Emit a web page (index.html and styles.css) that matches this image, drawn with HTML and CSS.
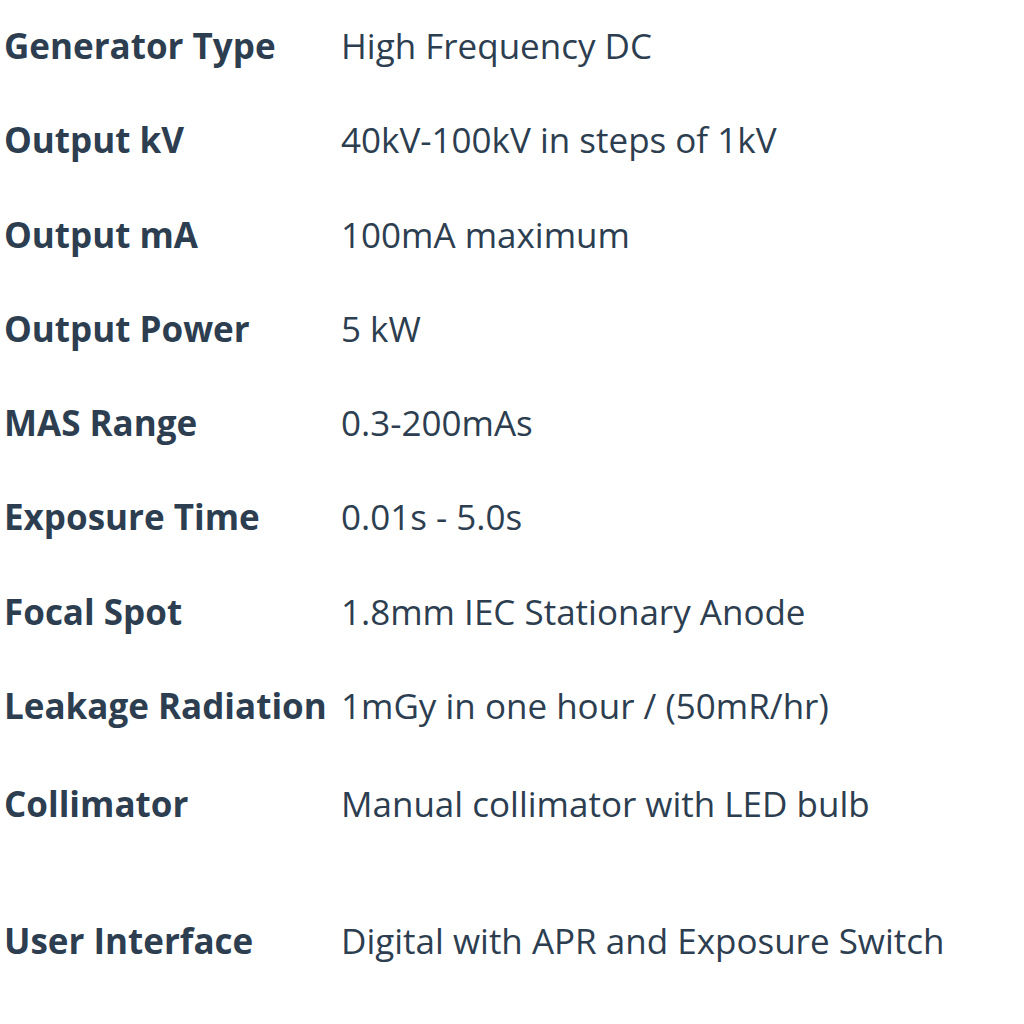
FILE: index.html
```html
<!DOCTYPE html>
<html lang="en">
<head>
<meta charset="utf-8">
<title>Specifications</title>
<link rel="stylesheet" href="styles.css">
</head>
<body>
<div class="specs">
  <div class="row"><div class="label">Generator Type</div><div class="value">High Frequency DC</div></div>
  <div class="row"><div class="label">Output kV</div><div class="value">40kV-100kV in steps of 1kV</div></div>
  <div class="row"><div class="label">Output mA</div><div class="value">100mA maximum</div></div>
  <div class="row"><div class="label">Output Power</div><div class="value">5 kW</div></div>
  <div class="row"><div class="label">MAS Range</div><div class="value">0.3-200mAs</div></div>
  <div class="row"><div class="label">Exposure Time</div><div class="value">0.01s - 5.0s</div></div>
  <div class="row"><div class="label">Focal Spot</div><div class="value">1.8mm IEC Stationary Anode</div></div>
  <div class="row"><div class="label">Leakage Radiation</div><div class="value">1mGy in one hour / (50mR/hr)</div></div>
  <div class="row row-tall"><div class="label">Collimator</div><div class="value">Manual collimator with LED bulb</div></div>
  <div class="row"><div class="label">User Interface</div><div class="value">Digital with APR and Exposure Switch</div></div>
</div>
</body>
</html>
```
FILE: styles.css
```css
html, body {
  margin: 0;
  padding: 0;
  background: #ffffff;
}
body {
  font-family: "Open Sans", "Noto Sans", "Liberation Sans", sans-serif;
  color: #2c3e50;
  font-size: 35px;
  line-height: 48px;
}
.specs {
  display: flex;
  flex-direction: column;
  padding-left: 4px;
}
.row {
  display: grid;
  grid-template-columns: 337px 1fr;
  padding: 22px 0 24.3px;
}
.row-tall {
  padding: 26px 0 66.6px;
}
.label {
  font-weight: 700;
  white-space: nowrap;
}
.value {
  font-weight: 400;
  white-space: nowrap;
}
```
